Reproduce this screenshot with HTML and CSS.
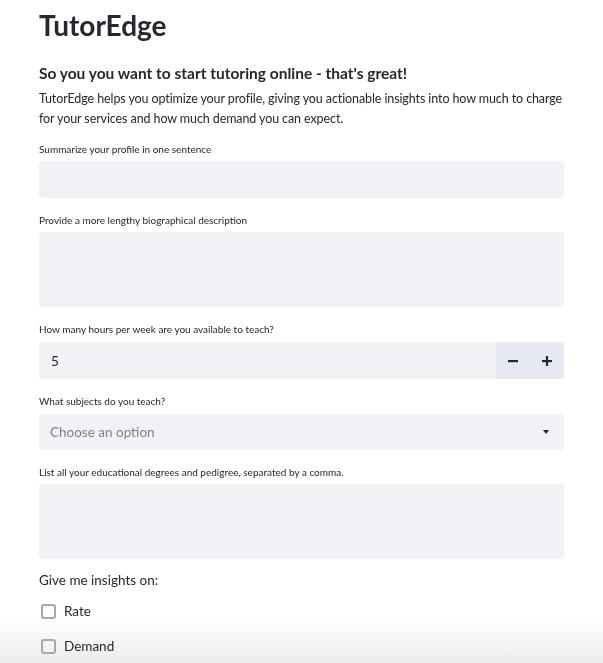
FILE: index.html
```html
<!DOCTYPE html>
<html lang="en">
<head>
<meta charset="utf-8">
<title>TutorEdge</title>
<link rel="stylesheet" href="styles.css">
</head>
<body>
<div class="fade"></div>
<main class="page">
  <h1 class="title">TutorEdge</h1>
  <h3 class="subtitle">So you you want to start tutoring online - that's great!</h3>
  <p class="intro">TutorEdge helps you optimize your profile, giving you actionable insights into how much to charge for your services and how much demand you can expect.</p>

  <div class="field">
    <label class="label">Summarize your profile in one sentence</label>
    <div class="input"></div>
  </div>

  <div class="field">
    <label class="label">Provide a more lengthy biographical description</label>
    <div class="input textarea"></div>
  </div>

  <div class="field">
    <label class="label">How many hours per week are you available to teach?</label>
    <div class="number">
      <div class="number-value">5</div>
      <div class="steppers">
        <span class="step">
          <svg width="10" height="10" viewBox="0 0 10 10"><rect x="0" y="4" width="10" height="2.2" fill="#262730"/></svg>
        </span>
        <span class="step">
          <svg width="10" height="10" viewBox="0 0 10 10"><rect x="0" y="4" width="10" height="2.2" fill="#262730"/><rect x="3.9" y="0" width="2.2" height="10" fill="#262730"/></svg>
        </span>
      </div>
    </div>
  </div>

  <div class="field">
    <label class="label">What subjects do you teach?</label>
    <div class="select">
      <span class="placeholder">Choose an option</span>
      <svg class="caret" width="6" height="4" viewBox="0 0 6 4"><path d="M0 0 H6 L3 4 Z" fill="#262730"/></svg>
    </div>
  </div>

  <div class="field">
    <label class="label">List all your educational degrees and pedigree, separated by a comma.</label>
    <div class="input textarea"></div>
  </div>

  <p class="group-label">Give me insights on:</p>
  <div class="check first"><span class="box"></span><span class="check-text">Rate</span></div>
  <div class="check"><span class="box"></span><span class="check-text">Demand</span></div>
</main>
</body>
</html>
```

FILE: styles.css
```css
html {
  margin: 0;
  padding: 0;
  background: #ffffff;
}
body {
  margin: 0;
  padding: 0;
  font-family: Lato, "Open Sans", sans-serif;
  color: #262730;
}
.page {
  width: 525px;
  padding: 9px 0 0 39px;
  display: flex;
  flex-direction: column;
}
.title {
  margin: 0;
  font-size: 28px;
  font-weight: 700;
  line-height: 32px;
}
.subtitle {
  margin: 22px 0 0;
  font-size: 15.5px;
  font-weight: 700;
  line-height: 20px;
}
.intro {
  margin: 6px 0 0;
  font-size: 12.5px;
  letter-spacing: -0.1px;
  line-height: 19.5px;
}
.field {
  margin-top: 15px;
  display: flex;
  flex-direction: column;
}
.field:first-of-type {
  margin-top: 14px;
}
.label {
  font-size: 10px;
  line-height: 14px;
  margin-bottom: 5px;
}
.input {
  height: 37px;
  background: #f0f2f6;
  border-radius: 4px;
}
.textarea {
  height: 75px;
}
.number {
  height: 37px;
  margin-top: 1px;
  display: flex;
  border-radius: 4px;
  overflow: hidden;
  background: #f0f2f6;
}
.number-value {
  flex: 1;
  display: flex;
  align-items: center;
  padding-left: 12px;
  font-size: 13.5px;
}
.steppers {
  display: flex;
  width: 68px;
  background: #e6e9ef;
}
.step {
  flex: 1;
  display: flex;
  align-items: center;
  justify-content: center;
}
.select {
  height: 36px;
  margin-top: 1px;
  background: #f0f2f6;
  border-radius: 4px;
  display: flex;
  align-items: center;
  justify-content: space-between;
  padding: 0 15px 0 11px;
}
.placeholder {
  font-size: 13.5px;
  color: #7d8089;
}
.caret {
  display: block;
}
.group-label {
  margin: 12px 0 0;
  font-size: 13.5px;
  line-height: 18px;
}
.check {
  display: flex;
  align-items: center;
  margin-top: 17px;
  height: 18px;
}
.check.first {
  margin-top: 13px;
}
.box {
  width: 11px;
  height: 11px;
  border: 2px solid #a3a8b4;
  border-radius: 3px;
  margin-left: 2px;
  margin-right: 8px;
}
.check-text {
  font-size: 13.5px;
}
.fade {
  position: fixed;
  left: 0;
  right: 0;
  bottom: 0;
  height: 45px;
  z-index: -1;
  background: linear-gradient(to bottom, rgba(236,236,236,0), rgba(236,236,236,1));
}
```
